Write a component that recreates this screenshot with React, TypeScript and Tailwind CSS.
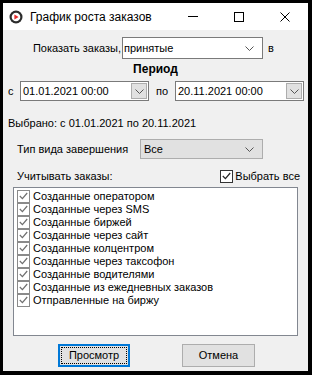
import React from "react";

const Chevron = () => (
  <svg width="9" height="5" viewBox="0 0 9 5" fill="none">
    <path d="M0.5 0.5 L4.5 4.5 L8.5 0.5" stroke="#555" strokeWidth="1" />
  </svg>
);

const Check = ({ gray }: { gray?: boolean }) => (
  <span
    className={`flex h-[13px] w-[13px] shrink-0 items-center justify-center border bg-white ${gray ? "border-[#8a8a8a]" : "border-[#333]"}`}
  >
    <svg width="9" height="8" viewBox="0 0 9 8" fill="none">
      <path d="M0.8 4 L3.4 6.6 L8.2 1" stroke={gray ? "#6f6f6f" : "#222"} strokeWidth="1.2" />
    </svg>
  </span>
);

const DatePicker = ({ value }: { value: string }) => (
  <div className="flex h-[20px] w-[129px] items-center border border-[#7a7a7a] bg-white pl-[2px] pr-[1px]">
    <span className="flex-1 text-[11px] leading-none text-black">{value}</span>
    <span className="flex h-[16px] w-[16px] items-center justify-center border border-[#adadad] bg-[#e1e1e1]">
      <Chevron />
    </span>
  </div>
);

const items = [
  "Созданные оператором",
  "Созданные через SMS",
  "Созданные биржей",
  "Созданные через сайт",
  "Созданные колцентром",
  "Созданные через таксофон",
  "Созданные водителями",
  "Созданные из ежедневных заказов",
  "Отправленные на биржу",
];

export default function App() {
  return (
    <div
      className="h-[375px] w-[312px] bg-black pb-[4px] pl-[3px] pr-[4px] pt-[3px]"
      style={{ fontFamily: '"Liberation Sans", Arial, sans-serif' }}
    >
      <div className="flex h-full flex-col bg-[#f0f0f0]">
        {/* title bar */}
        <div className="flex h-[27px] shrink-0 items-center bg-white text-black">
          <svg className="ml-[6px]" width="14" height="14" viewBox="0 0 14 14">
            <circle cx="7" cy="7" r="6.5" fill="#2b2b2b" />
            <circle cx="7" cy="7" r="4.3" fill="#fff" />
            <path d="M5.4 4.4 L9.6 7 L5.4 9.6 Z" fill="#e52b2b" />
          </svg>
          <span className="ml-[7px] text-[12px]">График роста заказов</span>
          <div className="ml-auto flex items-center">
            <span className="flex h-[27px] w-[46px] items-center justify-center">
              <span className="h-px w-[10px] bg-black" />
            </span>
            <span className="flex h-[27px] w-[46px] items-center justify-center">
              <span className="h-[10px] w-[10px] border border-black" />
            </span>
            <span className="flex h-[27px] w-[46px] items-center justify-center">
              <svg width="10" height="10" viewBox="0 0 10 10">
                <path d="M0.5 0.5 L9.5 9.5 M9.5 0.5 L0.5 9.5" stroke="#000" strokeWidth="1" />
              </svg>
            </span>
          </div>
        </div>

        {/* show orders row */}
        <div className="mt-[7px] flex h-[22px] items-center text-[11px] text-black">
          <span className="ml-[26px] w-[92px] text-right">Показать заказы,</span>
          <div className="ml-[1px] flex h-[22px] w-[141px] items-center border border-[#7a7a7a] bg-white pl-[1px] pr-[8px]">
            <span className="flex-1">принятые</span>
            <Chevron />
          </div>
          <span className="ml-[5px]">в</span>
        </div>

        <div className="mt-[3px] text-center text-[12px] font-bold leading-[14px] text-black">Период</div>

        {/* date row */}
        <div className="mt-[5px] flex items-center text-[11px] text-black">
          <span className="ml-[5px] w-[12px]">с</span>
          <DatePicker value="01.01.2021 00:00" />
          <span className="ml-[7px] w-[19px]">по</span>
          <DatePicker value="20.11.2021 00:00" />
        </div>

        <div className="ml-[5px] mt-[16px] text-[11px] leading-[13px] text-black">
          Выбрано: с 01.01.2021 по 20.11.2021
        </div>

        {/* type row */}
        <div className="mt-[9px] flex items-center text-[11px] text-black">
          <span className="ml-[14px] w-[123px]">Тип вида завершения</span>
          <div className="flex h-[20px] w-[123px] items-center border border-[#adadad] bg-[#e1e1e1] pl-[3px] pr-[8px]">
            <span className="flex-1">Все</span>
            <Chevron />
          </div>
        </div>

        {/* include orders */}
        <div className="mt-[9px] flex items-center text-[11px] text-black">
          <span className="ml-[14px]">Учитывать заказы:</span>
          <label className="ml-auto mr-[8px] flex items-center gap-[2px]">
            <Check />
            <span>Выбрать все</span>
          </label>
        </div>

        <div className="ml-[10px] mt-[2px] h-[149px] w-[285px] border border-[#828790] bg-white pl-[3px] pt-[2px]">
          {items.map((t) => (
            <div key={t} className="flex h-[13px] items-center gap-[3px] text-[11px] text-black">
              <Check gray />
              <span className="leading-none">{t}</span>
            </div>
          ))}
        </div>

        {/* buttons */}
        <div className="mt-[8px] flex">
          <button className="ml-[55px] flex h-[23px] w-[72px] items-center justify-center border-2 border-[#0078d7] bg-[#e1e1e1] p-[1px] text-[11px] text-black">
            <span className="flex h-full w-full items-center justify-center border border-dotted border-black">Просмотр</span>
          </button>
          <button className="ml-[52px] h-[23px] w-[73px] border border-[#adadad] bg-[#e1e1e1] text-[11px] text-black">
            Отмена
          </button>
        </div>
      </div>
    </div>
  );
}
